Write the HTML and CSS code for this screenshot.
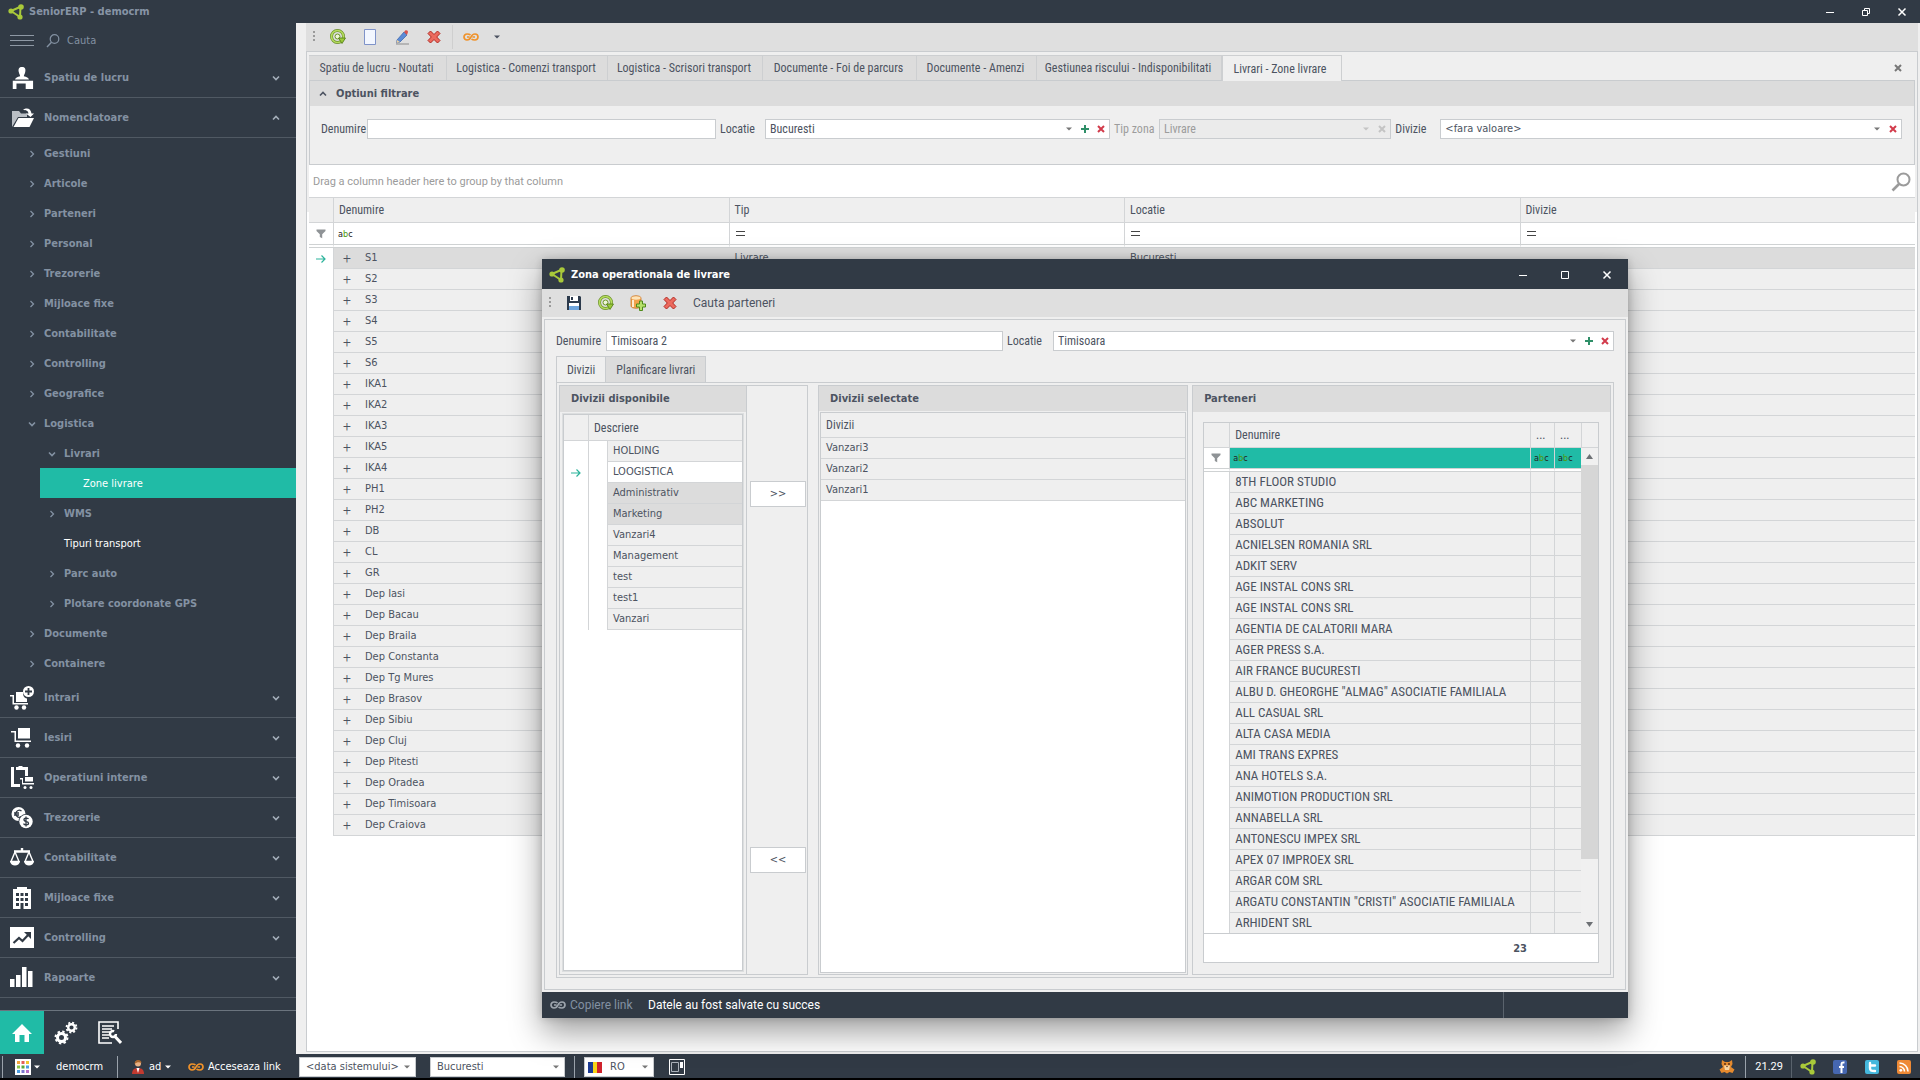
FILE: index.html
```html
<!DOCTYPE html>
<html lang="ro">
<head>
<meta charset="utf-8">
<title>SeniorERP - democrm</title>
<link rel="stylesheet" href="styles.css">
</head>
<body>
<svg class="defs" aria-hidden="true">
  <symbol id="logo" viewBox="0 0 16 16"><path d="M3 7 12 3M3 7l9 6M12.500 3l-.5 10" fill="none" stroke="#a9c93a" stroke-width="2"/><circle cx="3" cy="7" r="2.600" fill="#a9c93a"/><circle cx="13" cy="3" r="2.800" fill="#a9c93a"/><circle cx="12" cy="13" r="2.600" fill="#a9c93a"/></symbol>
  <symbol id="down" viewBox="0 0 8 8"><path d="M1 2.500 4 5.500 7 2.500" fill="none" stroke="currentColor" stroke-width="1.600"/></symbol>
  <symbol id="up" viewBox="0 0 8 8"><path d="M1 5.500 4 2.500 7 5.500" fill="none" stroke="currentColor" stroke-width="1.600"/></symbol>
  <symbol id="right" viewBox="0 0 8 8"><path d="M2.500 1 5.500 4 2.500 7" fill="none" stroke="currentColor" stroke-width="1.300"/></symbol>
  <symbol id="caret" viewBox="0 0 6 6"><path d="M0 1.500h6L3 4.500z" fill="currentColor"/></symbol>
  <symbol id="plus" viewBox="0 0 8 8"><path d="M4 0v8M0 4h8" stroke="currentColor" stroke-width="2"/></symbol>
  <symbol id="cross" viewBox="0 0 8 8"><path d="M1 1l6 6M7 1 1 7" stroke="currentColor" stroke-width="2"/></symbol>
  <symbol id="min" viewBox="0 0 10 10"><path d="M1 5.500h8" stroke="#fff"/></symbol>
  <symbol id="max" viewBox="0 0 10 10"><path d="M1.500 1.500h7v7h-7z" fill="none" stroke="#fff"/></symbol>
  <symbol id="restore" viewBox="0 0 10 10"><path d="M1.500 3.500h5v5h-5zM3.500 3.500v-2h5v5h-2" fill="none" stroke="#fff"/></symbol>
  <symbol id="close" viewBox="0 0 10 10"><path d="M1.500 1.500l7 7M8.500 1.500l-7 7" stroke="#fff" stroke-width="1.500"/></symbol>
  <symbol id="loupe" viewBox="0 0 20 20"><circle cx="12.500" cy="7.500" r="6" fill="none" stroke="currentColor" stroke-width="2"/><path d="M8 12 1.500 18.500" stroke="currentColor" stroke-width="2.600"/></symbol>
  <symbol id="loupe-thin" viewBox="0 0 14 14"><circle cx="8.500" cy="5" r="4.300" fill="none" stroke="currentColor" stroke-width="1.200"/><path d="M5.500 8.200 1 13" stroke="currentColor" stroke-width="1.400"/></symbol>
  <symbol id="refresh" viewBox="0 0 16 16"><circle cx="7.500" cy="7.500" r="6" fill="none" stroke="#6b8f2c" stroke-width="3"/><circle cx="7.500" cy="7.500" r="6" fill="none" stroke="#b5dc5e" stroke-width="1.700"/><circle cx="7.500" cy="7.500" r="2.500" fill="#eef6d8" stroke="#6b9526"/><path d="M8.500 9h7L12 14.500z" fill="#9ccb3b" stroke="#4f7a12" stroke-width=".8"/></symbol>
  <symbol id="page" viewBox="0 0 16 16"><path d="M2.500.5h11v15h-11z" fill="#f3f7ff" stroke="#7f93c9"/></symbol>
  <symbol id="pencil" viewBox="0 0 16 16"><path d="M3 11 10 3l3 3-7 7-3.500 1z" fill="#5b8bd6" stroke="#3560a8" stroke-width=".7"/><path d="M10 3l1.500-1.700c1.500-.6 2.500.6 2.500 1.700L13 6z" fill="#d8534c"/><path d="M3 11l3 2-3.500 1z" fill="#f0d2a0"/><path d="M2 15h13" stroke="#8b8b8b"/></symbol>
  <symbol id="delete" viewBox="0 0 16 16"><path d="M2 4.500 4.500 2 8 5.500 11.500 2 14 4.500 10.700 8 14 11.500 11.500 14 8 10.500 4.500 14 2 11.500 5.300 8z" fill="#ec6a5e" stroke="#b32a22"/></symbol>
  <symbol id="chain" viewBox="0 0 16 8"><path d="M7.500 2C6.500 1 5.500 1 4 1a3 3 0 0 0 0 6c2 0 3-.6 4-3s2-3 4-3a3 3 0 0 1 0 6c-1.500 0-2.500 0-3.500-1M4 4h2.500M9.500 4H12" fill="none" stroke="currentColor" stroke-width="1.700"/></symbol>
  <symbol id="save" viewBox="0 0 16 16"><path d="M1 1h13l1 1v13H1z" fill="#2c3a4c"/><path d="M4 1h8v5H4z" fill="#fff"/><path d="M5 2h2v3H5z" fill="#2c3a4c"/><path d="M3 8h10v7H3z" fill="#fff"/><path d="M3 11h10v4H3z" fill="#6fa5dc"/></symbol>
  <symbol id="dbadd" viewBox="0 0 16 16"><path d="M1 3c0-3 10-3 10 0v8c0 3-10 3-10 0z" fill="#f1a24b" stroke="#c9772a" stroke-width=".8"/><ellipse cx="6" cy="3" rx="4.600" ry="1.700" fill="#fde3b8"/><path d="M3 5v7" stroke="#fde9cf" stroke-width="2"/><path d="M9.500 6h3v3h3v3h-3v3.500h-3V12h-3V9h3z" fill="#b6e06a" stroke="#4f8a1a"/></symbol>
  <symbol id="filter" viewBox="0 0 10 10"><path d="M.5.5h9v1.500L6.200 5.200v4L3.800 8V5.200L.5 2z" fill="#8f9396"/></symbol>
  <symbol id="arrow" viewBox="0 0 10 8"><path d="M0 4h9M5.500.5 9 4 5.500 7.500" fill="none" stroke="#2cb39b" stroke-width="1.200"/></symbol>
</svg>

<header class="titlebar">
  <svg class="i16"><use href="#logo"/></svg><h1>SeniorERP - democrm</h1>
  <div class="winbtns"><button aria-label="Minimizare"><svg class="i10"><use href="#min"/></svg></button><button aria-label="Restaurare"><svg class="i10"><use href="#restore"/></svg></button><button aria-label="Inchidere"><svg class="i10"><use href="#close"/></svg></button></div>
</header>

<div class="workspace">
  <nav class="sidebar">
    <div class="find"><button class="burger" aria-label="Meniu"><i></i><i></i><i></i></button><svg class="i14"><use href="#loupe-thin"/></svg><input type="text" placeholder="Cauta" aria-label="Cauta"></div>
    <a class="sec" href="#"><svg viewBox="0 0 24 26"><path d="M12 1c4 0 4 3 3.500 5.500C15 9 14 10 14 11c3 .7 5 1.500 5.500 3.500h-15C5 12.500 7 11.700 10 11c0-1-1-2-1.500-4.500C8 4 8 1 12 1zM2 16h22v9h-8v-6H6v6H2z" fill="#fff"/></svg><span>Spatiu de lucru</span><svg class="i8"><use href="#down"/></svg></a>
    <a class="sec" href="#"><svg viewBox="0 0 24 24"><path d="M2 5h7l2 2.500h6V11H8L2 21z" fill="#b9bec4"/><path d="M8.500 12H24l-4.500 9H3.500z" fill="#fff"/><path d="M13 4c4-3 8-1 8.500 3.500H24L20.500 11 16 7.500h2.500C18 4.500 16 4 13 4z" fill="#fff"/></svg><span>Nomenclatoare</span><svg class="i8"><use href="#up"/></svg></a>
    <a class="sub" href="#"><svg class="i8"><use href="#right"/></svg>Gestiuni</a>
    <a class="sub" href="#"><svg class="i8"><use href="#right"/></svg>Articole</a>
    <a class="sub" href="#"><svg class="i8"><use href="#right"/></svg>Parteneri</a>
    <a class="sub" href="#"><svg class="i8"><use href="#right"/></svg>Personal</a>
    <a class="sub" href="#"><svg class="i8"><use href="#right"/></svg>Trezorerie</a>
    <a class="sub" href="#"><svg class="i8"><use href="#right"/></svg>Mijloace fixe</a>
    <a class="sub" href="#"><svg class="i8"><use href="#right"/></svg>Contabilitate</a>
    <a class="sub" href="#"><svg class="i8"><use href="#right"/></svg>Controlling</a>
    <a class="sub" href="#"><svg class="i8"><use href="#right"/></svg>Geografice</a>
    <a class="sub" href="#"><svg class="i8"><use href="#down"/></svg>Logistica</a>
    <a class="sub lvl2" href="#"><svg class="i8"><use href="#down"/></svg>Livrari</a>
    <a class="sub current" href="#">Zone livrare</a>
    <a class="sub lvl2" href="#"><svg class="i8"><use href="#right"/></svg>WMS</a>
    <a class="sub leaf" href="#">Tipuri transport</a>
    <a class="sub lvl2" href="#"><svg class="i8"><use href="#right"/></svg>Parc auto</a>
    <a class="sub lvl2" href="#"><svg class="i8"><use href="#right"/></svg>Plotare coordonate GPS</a>
    <a class="sub" href="#"><svg class="i8"><use href="#right"/></svg>Documente</a>
    <a class="sub" href="#"><svg class="i8"><use href="#right"/></svg>Containere</a>
    <a class="sec" href="#"><svg viewBox="0 0 24 24"><path d="M0 9h4v8h14v1.500H2.500v-8H0zM6 6h7c0 4 1 6 4 6.500V16H6z" fill="#fff"/><circle cx="6.500" cy="21.500" r="2.200" fill="#fff"/><circle cx="14" cy="21.500" r="2.200" fill="#fff"/><circle cx="18.500" cy="5.500" r="5.500" fill="#fff"/><path d="M18.500 2v7M15 5.500h7" stroke="#313a45" stroke-width="1.800"/></svg><span>Intrari</span><svg class="i8"><use href="#down"/></svg></a>
    <a class="sec" href="#"><svg viewBox="0 0 24 24"><path d="M1 5h5v9.500h15V16H4.500V6.500H1zM8 2h12v10.500H8z" fill="#fff"/><circle cx="8" cy="19.500" r="2.200" fill="#fff"/><circle cx="17" cy="19.500" r="2.200" fill="#fff"/></svg><span>Iesiri</span><svg class="i8"><use href="#down"/></svg></a>
    <a class="sec" href="#"><svg viewBox="0 0 24 24"><path d="M1 1h3v17h6v3H1zM6 1h2l1-1h3l1 1h2v3H6zM15 1h3v9h-3zM15 11h8v4.500h-8zM10 12h3v5h11v1.500H12v-5h-2z" fill="#fff"/><circle cx="15" cy="21.500" r="1.500" fill="#fff"/><circle cx="21" cy="21.500" r="1.500" fill="#fff"/></svg><span>Operatiuni interne</span><svg class="i8"><use href="#down"/></svg></a>
    <a class="sec" href="#"><svg viewBox="0 0 24 24"><circle cx="8.500" cy="8" r="7" fill="#fff"/><path d="M11.500 5a3.500 3.500 0 1 0 0 5.500M4 7h5M4 9h5" fill="none" stroke="#313a45" stroke-width="1.300"/><circle cx="16" cy="15.500" r="7.500" fill="#313a45"/><circle cx="16" cy="15.500" r="6.700" fill="#fff"/><path d="M18.500 13c-1-1.500-5-1.200-4.500 1s4.500 1 4.500 3.200-4 2-5 .4M16 10.500v10" fill="none" stroke="#313a45" stroke-width="1.300"/></svg><span>Trezorerie</span><svg class="i8"><use href="#down"/></svg></a>
    <a class="sec" href="#"><svg viewBox="0 0 24 24"><path d="M12 2v4M4 5.500h16" stroke="#fff" stroke-width="2.400"/><path d="M5 6 1 15.500h8zM19 6l-4 9.500h8z" fill="none" stroke="#fff" stroke-width="1.400"/><path d="M0 15h10c-.5 6-9.500 6-10 0zM14 15h10c-.5 6-9.500 6-10 0z" fill="#fff"/></svg><span>Contabilitate</span><svg class="i8"><use href="#down"/></svg></a>
    <a class="sec" href="#"><svg viewBox="0 0 24 24"><path d="M7 1h10v2h4v20H3V3h4z" fill="#fff"/><path d="M6 7h3v3H6zM10.500 7h3v3h-3zM15 7h3v3h-3zM6 12h3v3H6zM10.500 12h3v3h-3zM15 12h3v3h-3zM6 17h3v3H6zM10.500 17h3v6h-3zM15 17h3v3h-3z" fill="#313a45"/></svg><span>Mijloace fixe</span><svg class="i8"><use href="#down"/></svg></a>
    <a class="sec" href="#"><svg viewBox="0 0 24 24"><path d="M0 1h24v21H0z" fill="#fff"/><path d="M3.500 17 9 12l3.500 3L19 8" fill="none" stroke="#313a45" stroke-width="2.200"/><path d="M14 6h7v7z" fill="#313a45"/></svg><span>Controlling</span><svg class="i8"><use href="#down"/></svg></a>
    <a class="sec" href="#"><svg viewBox="0 0 24 24"><path d="M0 13h4.500v8H0zM6 9h4.500v12H6zM12 1h4.500v20H12zM18 5h4.500v16H18z" fill="#fff"/></svg><span>Rapoarte</span><svg class="i8"><use href="#down"/></svg></a>
    <div class="dock">
      <button class="on" aria-label="Acasa"><svg class="i24" viewBox="0 0 24 24"><path d="M12 3 22 13h-3v8h-4.500v-7h-5v7H5v-8H2z" fill="#fff"/></svg></button>
      <button aria-label="Setari"><svg class="i24" viewBox="0 0 24 24"><g fill="none" stroke="#fff"><circle cx="7.500" cy="16.500" r="4" stroke-width="3"/><circle cx="7.500" cy="16.500" r="6" stroke-width="2" stroke-dasharray="2.400 2.310"/><circle cx="17.500" cy="6.500" r="3.300" stroke-width="2.400"/><circle cx="17.500" cy="6.500" r="5" stroke-width="1.800" stroke-dasharray="2 1.930"/></g></svg></button>
      <button aria-label="Rapoarte"><svg class="i24" viewBox="0 0 24 24"><path d="M20 8V1H1v21h13" fill="none" stroke="#fff" stroke-width="1.600"/><path d="M4 5h12M4 8h10M4 11h8M4 14h7M4 17h7" stroke="#fff" stroke-width="1.500"/><path d="M16 14.500 23 22" stroke="#fff" stroke-width="3"/><circle cx="15" cy="13" r="3" fill="none" stroke="#fff" stroke-width="2.400" stroke-dasharray="15 4"/></svg></button>
    </div>
  </nav>

  <main class="main">
    <div class="toolbar"><i class="grip"></i>
      <button aria-label="Reincarca"><svg class="i16"><use href="#refresh"/></svg></button>
      <button aria-label="Nou"><svg class="i16"><use href="#page"/></svg></button>
      <button aria-label="Editare"><svg class="i16"><use href="#pencil"/></svg></button>
      <button aria-label="Stergere"><svg class="i16"><use href="#delete"/></svg></button>
      <button class="linkbtn" aria-label="Link"><svg class="chain"><use href="#chain"/></svg></button>
      <button class="narrow" aria-label="Optiuni"><svg class="i6"><use href="#caret"/></svg></button>
    </div>
    <div class="document">
      <div class="tabs">
        <button>Spatiu de lucru - Noutati</button><button>Logistica - Comenzi transport</button><button>Logistica - Scrisori transport</button><button>Documente - Foi de parcurs</button><button>Documente - Amenzi</button><button>Gestiunea riscului - Indisponibilitati</button><button class="on">Livrari - Zone livrare</button>
        <button class="closetab" aria-label="Inchide"><svg class="i8"><use href="#cross"/></svg></button>
      </div>
      <section class="filters">
        <h2><svg class="i8"><use href="#up"/></svg>Optiuni filtrare</h2>
        <form class="filter-form">
          <label for="f-den">Denumire</label><input class="box" id="f-den" type="text">
          <label for="f-loc">Locatie</label>
          <div class="combo"><select id="f-loc"><option>Bucuresti</option></select><svg class="i6"><use href="#caret"/></svg><button type="button" class="add" aria-label="Adauga"><svg class="i8"><use href="#plus"/></svg></button><button type="button" class="clear" aria-label="Goleste"><svg class="i8"><use href="#cross"/></svg></button></div>
          <label class="off" for="f-tip">Tip zona</label>
          <div class="combo off"><select id="f-tip" disabled><option>Livrare</option></select><svg class="i6"><use href="#caret"/></svg><button type="button" class="clear" disabled aria-label="Goleste"><svg class="i8"><use href="#cross"/></svg></button></div>
          <label for="f-div">Divizie</label>
          <div class="combo wide"><select id="f-div"><option>&lt;fara valoare&gt;</option></select><svg class="i6"><use href="#caret"/></svg><button type="button" class="clear" aria-label="Goleste"><svg class="i8"><use href="#cross"/></svg></button></div>
        </form>
      </section>
      <div class="groupbar"><span>Drag a column header here to group by that column</span><svg class="i20"><use href="#loupe"/></svg></div>
      <table class="grid">
        <colgroup><col class="ind"><col><col><col><col></colgroup>
        <thead>
          <tr><th></th><th>Denumire</th><th>Tip</th><th>Locatie</th><th>Divizie</th></tr>
          <tr class="frow"><td><svg class="i10"><use href="#filter"/></svg></td><td><span class="abc">a<b>b</b>c</span></td><td><span class="eq"></span></td><td><span class="eq"></span></td><td><span class="eq"></span></td></tr>
        </thead>
        <tbody>
          <tr class="focus"><td><svg class="arrow"><use href="#arrow"/></svg></td><td><button>+</button>S1</td><td>Livrare</td><td>Bucuresti</td><td></td></tr>
          <tr><td></td><td><button>+</button>S2</td><td></td><td></td><td></td></tr>
          <tr><td></td><td><button>+</button>S3</td><td></td><td></td><td></td></tr>
          <tr><td></td><td><button>+</button>S4</td><td></td><td></td><td></td></tr>
          <tr><td></td><td><button>+</button>S5</td><td></td><td></td><td></td></tr>
          <tr><td></td><td><button>+</button>S6</td><td></td><td></td><td></td></tr>
          <tr><td></td><td><button>+</button>IKA1</td><td></td><td></td><td></td></tr>
          <tr><td></td><td><button>+</button>IKA2</td><td></td><td></td><td></td></tr>
          <tr><td></td><td><button>+</button>IKA3</td><td></td><td></td><td></td></tr>
          <tr><td></td><td><button>+</button>IKA5</td><td></td><td></td><td></td></tr>
          <tr><td></td><td><button>+</button>IKA4</td><td></td><td></td><td></td></tr>
          <tr><td></td><td><button>+</button>PH1</td><td></td><td></td><td></td></tr>
          <tr><td></td><td><button>+</button>PH2</td><td></td><td></td><td></td></tr>
          <tr><td></td><td><button>+</button>DB</td><td></td><td></td><td></td></tr>
          <tr><td></td><td><button>+</button>CL</td><td></td><td></td><td></td></tr>
          <tr><td></td><td><button>+</button>GR</td><td></td><td></td><td></td></tr>
          <tr><td></td><td><button>+</button>Dep Iasi</td><td></td><td></td><td></td></tr>
          <tr><td></td><td><button>+</button>Dep Bacau</td><td></td><td></td><td></td></tr>
          <tr><td></td><td><button>+</button>Dep Braila</td><td></td><td></td><td></td></tr>
          <tr><td></td><td><button>+</button>Dep Constanta</td><td></td><td></td><td></td></tr>
          <tr><td></td><td><button>+</button>Dep Tg Mures</td><td></td><td></td><td></td></tr>
          <tr><td></td><td><button>+</button>Dep Brasov</td><td></td><td></td><td></td></tr>
          <tr><td></td><td><button>+</button>Dep Sibiu</td><td></td><td></td><td></td></tr>
          <tr><td></td><td><button>+</button>Dep Cluj</td><td></td><td></td><td></td></tr>
          <tr><td></td><td><button>+</button>Dep Pitesti</td><td></td><td></td><td></td></tr>
          <tr><td></td><td><button>+</button>Dep Oradea</td><td></td><td></td><td></td></tr>
          <tr><td></td><td><button>+</button>Dep Timisoara</td><td></td><td></td><td></td></tr>
          <tr><td></td><td><button>+</button>Dep Craiova</td><td></td><td></td><td></td></tr>
        </tbody>
      </table>
    </div>
  </main>
</div>

<footer class="taskbar">
  <span class="sep"></span>
  <button class="apps" aria-label="Aplicatii"><svg class="i16" viewBox="0 0 16 16"><path d="M0 0h16v16H0z" fill="#fff"/><path d="M2 2h3v3H2z" fill="#f3a33a"/><path d="M6.500 2h3v3h-3z" fill="#e2605a"/><path d="M11 2h3v3h-3z" fill="#f0c52e"/><path d="M2 6.500h3v3H2z" fill="#8ac249"/><path d="M6.500 6.500h3v3h-3z" fill="#58a840"/><path d="M11 6.500h3v3h-3z" fill="#4d9de0"/><path d="M2 11h3v3H2z" fill="#4d9de0"/><path d="M6.500 11h3v3h-3z" fill="#7a78d0"/><path d="M11 11h3v3h-3z" fill="#b46fc7"/></svg><svg class="i6"><use href="#caret"/></svg></button>
  <span class="db">democrm</span>
  <span class="sep"></span>
  <button class="user"><svg class="i14" viewBox="0 0 14 14"><circle cx="7" cy="3.500" r="3" fill="#e9b184"/><path d="M3.500 4C3.500-1 10.500-1 10.500 3 9 2 6 1.500 3.500 4z" fill="#a8652c"/><path d="M1 14c0-4 2-6 6-6s6 2 6 6z" fill="#c23a30"/><path d="M5.500 8 7 13l1.500-5z" fill="#fff"/></svg>ad<svg class="i6"><use href="#caret"/></svg></button>
  <button class="golink"><svg class="chain"><use href="#chain"/></svg>Acceseaza link</button>
  <div class="combo date"><select aria-label="Data"><option>&lt;data sistemului&gt;</option></select><svg class="i6"><use href="#caret"/></svg></div>
  <div class="combo city"><select aria-label="Locatie de lucru"><option>Bucuresti</option></select><svg class="i6"><use href="#caret"/></svg></div>
  <span class="sep"></span>
  <div class="combo lang"><svg class="flag" viewBox="0 0 14 11"><path d="M0 0h5v11H0z" fill="#1d3c94"/><path d="M5 0h4v11H5z" fill="#f7d417"/><path d="M9 0h5v11H9z" fill="#d0222c"/></svg><select aria-label="Limba"><option>RO</option></select><svg class="i6"><use href="#caret"/></svg></div>
  <button class="layout" aria-label="Aspect"><svg class="i16" viewBox="0 0 16 16"><path d="M.5.5h15v15H.5z" fill="none" stroke="#fff"/><path d="M2.500 3.500h7v9h-7z" fill="none" stroke="#aab1ba"/><path d="M11 3h3v6h-3z" fill="#fff"/></svg></button>
  <div class="tray">
    <svg class="i16" viewBox="0 0 16 16"><path d="M3 1l3 2h4l3-2 .5 4-1.500 3 3.500 2.500-2 3.500-3-1-2.500 1.500L5.500 13l-3 1-2-3.500L4 8 2.500 5z" fill="#e58a2e"/><path d="M5 6.500h6L10 11H6z" fill="#f8d6a5"/><circle cx="6" cy="5" r="1" fill="#5b2f14"/><circle cx="10" cy="5" r="1" fill="#5b2f14"/><path d="M7 7h2l-1 1.500z" fill="#5b2f14"/></svg>
    <span class="sep"></span><span class="clock">21.29</span><span class="sep dim"></span>
    <svg class="i16"><use href="#logo"/></svg>
    <svg class="i16" viewBox="0 0 16 16"><rect x="1" y="1" width="14" height="14" rx="2" fill="#4667b0"/><path d="M12.500 3.500c-2.500-.3-3 .5-3 2V14M7 8h5" fill="none" stroke="#fff" stroke-width="2"/></svg>
    <svg class="i16" viewBox="0 0 16 16"><rect x="1" y="1" width="14" height="14" rx="2" fill="#45b8dd"/><path d="M6 4v5c0 2.500 1 3 5 3M6 6.500h5" fill="none" stroke="#fff" stroke-width="2.400" stroke-linecap="round"/></svg>
    <svg class="i16" viewBox="0 0 16 16"><rect x="1" y="1" width="14" height="14" rx="2" fill="#ee8a36"/><circle cx="4.800" cy="11.300" r="1.400" fill="#fff"/><path d="M3.500 7.500a5 5 0 0 1 5 5M3.500 4a8.500 8.500 0 0 1 8.500 8.500" fill="none" stroke="#fff" stroke-width="1.600"/></svg>
  </div>
</footer>

<div class="dialog" role="dialog" aria-labelledby="dlg-title">
  <header><svg class="i16"><use href="#logo"/></svg><h2 id="dlg-title">Zona operationala de livrare</h2>
    <div class="winbtns"><button aria-label="Minimizare"><svg class="i10"><use href="#min"/></svg></button><button aria-label="Maximizare"><svg class="i10"><use href="#max"/></svg></button><button aria-label="Inchidere"><svg class="i10"><use href="#close"/></svg></button></div></header>
  <div class="toolbar"><i class="grip"></i>
    <button aria-label="Salvare"><svg class="i16"><use href="#save"/></svg></button>
    <button aria-label="Reincarca"><svg class="i16"><use href="#refresh"/></svg></button>
    <button aria-label="Adauga"><svg class="i16"><use href="#dbadd"/></svg></button>
    <button aria-label="Stergere"><svg class="i16"><use href="#delete"/></svg></button>
    <button class="text">Cauta parteneri</button></div>
  <div class="dbody">
    <form class="dform">
      <label for="d-den">Denumire</label><input class="box" id="d-den" type="text" value="Timisoara 2">
      <label for="d-loc">Locatie</label>
      <div class="combo"><select id="d-loc"><option>Timisoara</option></select><svg class="i6"><use href="#caret"/></svg><button type="button" class="add" aria-label="Adauga"><svg class="i8"><use href="#plus"/></svg></button><button type="button" class="clear" aria-label="Goleste"><svg class="i8"><use href="#cross"/></svg></button></div>
    </form>
    <div class="dtabs"><button class="on">Divizii</button><button>Planificare livrari</button></div>
    <div class="pane">
      <section class="group avail"><h3>Divizii disponibile</h3>
        <div class="list">
          <table><colgroup><col class="ind"><col class="indent"><col></colgroup>
            <thead><tr><th></th><th colspan="2">Descriere</th></tr></thead>
            <tbody>
              <tr><td></td><td></td><td>HOLDING</td></tr>
              <tr class="focus"><td><svg class="arrow"><use href="#arrow"/></svg></td><td></td><td>LOOGISTICA</td></tr>
              <tr class="sel"><td></td><td></td><td>Administrativ</td></tr>
              <tr class="sel"><td></td><td></td><td>Marketing</td></tr>
              <tr><td></td><td></td><td>Vanzari4</td></tr>
              <tr><td></td><td></td><td>Management</td></tr>
              <tr><td></td><td></td><td>test</td></tr>
              <tr><td></td><td></td><td>test1</td></tr>
              <tr><td></td><td></td><td>Vanzari</td></tr>
            </tbody></table>
        </div>
      </section>
      <div class="movers"><button>&gt;&gt;</button><button>&lt;&lt;</button></div>
      <section class="group chosen"><h3>Divizii selectate</h3>
        <div class="list"><table><thead><tr><th>Divizii</th></tr></thead><tbody><tr><td>Vanzari3</td></tr><tr><td>Vanzari2</td></tr><tr><td>Vanzari1</td></tr></tbody></table></div>
      </section>
      <section class="group partners"><h3>Parteneri</h3>
        <div class="list">
          <div class="scroller">
          <table><colgroup><col class="ind"><col><col class="c24"><col class="c27"></colgroup>
            <thead><tr><th></th><th>Denumire</th><th>...</th><th>...</th></tr>
            <tr class="frow"><td><svg class="i10"><use href="#filter"/></svg></td><td class="first"><span class="abc">a<b>b</b>c</span></td><td><span class="abc">a<b>b</b>c</span></td><td><span class="abc">a<b>b</b>c</span></td></tr></thead>
            <tbody>
              <tr><td></td><td>8TH FLOOR STUDIO</td><td></td><td></td></tr>
              <tr><td></td><td>ABC MARKETING</td><td></td><td></td></tr>
              <tr><td></td><td>ABSOLUT</td><td></td><td></td></tr>
              <tr><td></td><td>ACNIELSEN ROMANIA SRL</td><td></td><td></td></tr>
              <tr><td></td><td>ADKIT SERV</td><td></td><td></td></tr>
              <tr><td></td><td>AGE INSTAL CONS SRL</td><td></td><td></td></tr>
              <tr><td></td><td>AGE INSTAL CONS SRL</td><td></td><td></td></tr>
              <tr><td></td><td>AGENTIA DE CALATORII MARA</td><td></td><td></td></tr>
              <tr><td></td><td>AGER PRESS S.A.</td><td></td><td></td></tr>
              <tr><td></td><td>AIR FRANCE BUCURESTI</td><td></td><td></td></tr>
              <tr><td></td><td>ALBU D. GHEORGHE "ALMAG" ASOCIATIE FAMILIALA</td><td></td><td></td></tr>
              <tr><td></td><td>ALL CASUAL SRL</td><td></td><td></td></tr>
              <tr><td></td><td>ALTA CASA MEDIA</td><td></td><td></td></tr>
              <tr><td></td><td>AMI TRANS EXPRES</td><td></td><td></td></tr>
              <tr><td></td><td>ANA HOTELS S.A.</td><td></td><td></td></tr>
              <tr><td></td><td>ANIMOTION PRODUCTION SRL</td><td></td><td></td></tr>
              <tr><td></td><td>ANNABELLA SRL</td><td></td><td></td></tr>
              <tr><td></td><td>ANTONESCU IMPEX SRL</td><td></td><td></td></tr>
              <tr><td></td><td>APEX 07 IMPROEX SRL</td><td></td><td></td></tr>
              <tr><td></td><td>ARGAR COM SRL</td><td></td><td></td></tr>
              <tr><td></td><td>ARGATU CONSTANTIN "CRISTI" ASOCIATIE FAMILIALA</td><td></td><td></td></tr>
              <tr><td></td><td>ARHIDENT SRL</td><td></td><td></td></tr>
            </tbody></table>
            <div class="scrollbar"><i class="corner"></i><svg viewBox="0 0 17 17"><path d="M5 11l3.500-5 3.500 5z" fill="#6d7074"/></svg><i class="thumb"></i><i class="track"></i><svg viewBox="0 0 17 17"><path d="M5 6l3.500 5L12 6z" fill="#6d7074"/></svg></div>
          </div>
          <div class="total">23</div>
        </div>
      </section>
    </div>
  </div>
  <footer><button><svg class="chain"><use href="#chain"/></svg>Copiere link</button><span>Datele au fost salvate cu succes</span></footer>
</div>
</body>
</html>
```
FILE: styles.css
```css
:root{
  --dark:#313a45;
  --panel:#efefef;
  --head:#dcdcdc;
  --line:#c9cccf;
  --ink:#4c5361;
  --accent:#20bba6;
  --sans:"DejaVu Sans Condensed","DejaVu Sans",sans-serif;
  --narrow:"Roboto Condensed",Roboto,sans-serif;
}
*{box-sizing:border-box}
body{margin:0;height:100vh;display:flex;flex-direction:column;background:var(--dark);color:var(--ink);font:11px/14px var(--sans);overflow:hidden;position:relative}
button,input,select{font:inherit;color:inherit;border:0;background:none;margin:0;padding:0;border-radius:0}
select{appearance:none;outline:0;opacity:1}
h1,h2,h3{margin:0;font-size:11px;line-height:14px;font-weight:700}
svg{display:block;flex:none}
a{color:inherit;text-decoration:none}
table{border-collapse:separate;border-spacing:0;table-layout:fixed;width:100%}
th{font-weight:400;text-align:left}
th,td{padding:0;white-space:nowrap;overflow:hidden}
.defs{position:absolute;width:0;height:0}
.i6{width:6px;height:6px}.i8{width:8px;height:8px}.i10{width:10px;height:10px}.i14{width:14px;height:14px}.i16{width:16px;height:16px}.i20{width:20px;height:20px}.i24{width:24px;height:24px}
.chain{width:16px;height:8px}
.arrow{width:10px;height:8px}

/* window chrome */
.titlebar{flex:none;height:23px;display:flex;align-items:center;padding:1px 0 0 8px;color:#8794a5}
.titlebar h1{margin-left:5px;flex:1}
.winbtns{display:flex}
.winbtns button{width:36px;height:22px;display:grid;place-items:center}
.workspace{flex:1;display:flex;min-height:0}

/* sidebar */
.sidebar{width:296px;flex:none;display:flex;flex-direction:column;color:#8391a2;font-weight:700}
.find{display:flex;align-items:center;height:35px;padding:0 10px;font-weight:400}
.find input{margin-left:7px;width:160px}
.find input::placeholder{color:#8391a2;opacity:1}
.burger{width:24px;display:grid;gap:4px;margin-right:12px}
.burger i{height:1px;background:#8e98a4}
.sec{height:40px;flex:none;display:flex;align-items:center;padding:1px 16px 0 10px;border-bottom:1px solid #505963}
.sec svg:first-child{width:24px;height:24px}
.sec span{flex:1;padding-left:10px}
.sec .i8{color:#a5afba}
.sub{height:30px;flex:none;display:flex;align-items:center;padding:1px 0 0 28px;gap:8px}
.lvl2{padding-left:48px}
.leaf{padding-left:64px;color:#fff;font-weight:400}
.current{margin-left:40px;padding-left:43px;background:var(--accent);color:#fff;font-weight:400}
.dock{margin-top:auto;display:flex;border-top:1px solid #6b747e}
.dock button{width:44px;height:43px;display:grid;place-items:center}
.dock .on{background:var(--accent)}

/* toolbars */
.main{flex:1;min-width:0;display:flex;flex-direction:column;background:var(--panel);padding:0 2px 2px 10px}
.toolbar{flex:none;height:28px;display:flex;align-items:center;background:#dfdfdf;padding-left:7px}
.grip{width:2px;height:12px;margin-right:7px;background:repeating-linear-gradient(#9a9a9a 0 2px,transparent 2px 4px)}
.toolbar button{width:32px;height:24px;display:grid;place-items:center}
.toolbar .linkbtn{width:36px;margin-left:2px;border-left:1px solid #cfcfcf;color:#f0922a}
.toolbar .narrow{width:18px}
.toolbar .text{width:auto;padding:0 7px;font:12px/16px Roboto,sans-serif}
.document{flex:1;display:flex;flex-direction:column;border:1px solid var(--line);padding:3px 2px 0;min-height:0;background:linear-gradient(var(--panel) 0 160px,#fff 160px)}

/* document tabs */
.tabs{display:grid;grid-template-columns:138px 161px 155px 154px 120px 185px 120px 1fr;flex:none;height:26px;font:12px/24px var(--narrow);border-bottom:1px solid var(--line)}
.tabs button{background:var(--head);border:1px solid #cdcfd1;border-width:1px 1px 0 0;padding-right:2px;text-align:center;white-space:nowrap}
.tabs .on{background:var(--panel);border-left-width:1px;padding-right:4px;margin-bottom:-1px}
.tabs .closetab{border:0;background:none;justify-self:end;width:32px;display:grid;place-items:center;color:#777}

/* filter panel */
.filters{flex:none;border:1px solid var(--line);border-top:0;height:84px}
.filters h2{height:25px;display:flex;align-items:center;gap:9px;padding:1px 0 0 9px;background:var(--head)}
.filter-form{display:flex;align-items:center;padding:13px 12px 0 11px;font:12px/16px var(--narrow)}
.box,.combo{height:20px;border:1px solid var(--line);background:#fff}
.box{padding:0 4px;outline:0}
.combo{display:flex;align-items:center;min-width:0}
.combo select{flex:1;min-width:0;height:18px;padding:0 4px}
.combo .i6{color:#777}
.combo button{width:16px;height:18px;display:grid;place-items:center}
.combo>.i6{margin-right:5px}
.combo .add{color:#2f8f68}
.combo .clear{color:#d23b4b}
.filter-form label{flex:none;width:49px;padding-left:4px}
.filter-form label:first-child{width:46px;padding-left:0}
.filter-form .box{flex:340 1 0;min-width:0}
.filter-form .combo{flex:344 1 0}
.off{color:#9c9c9c}
.combo.off{background:#ebebeb}
.combo.off .i6,.combo.off .clear{color:#c4c4c4}
.filter-form .combo.off{flex-grow:231}
.filter-form .combo.wide{flex-grow:461}
.wide select{font:11px/14px var(--sans)}
.groupbar{flex:none;height:32px;display:flex;align-items:center;justify-content:space-between;background:#fff;color:#9b9b9b;padding:1px 4px 0;font:11px/14px Roboto,sans-serif}

/* main grid */
.grid .ind{width:24px}
.grid th{height:26px;background:var(--panel);border:1px solid #d3d5d7;border-width:1px 0 1px 1px;padding-left:5px;font:12px/16px var(--narrow)}
.grid .frow td{height:25px;background:#fff;border-left:1px solid #d3d5d7;border-bottom:4px double #cfd2d3;padding-left:4px}
.grid .frow td:first-child,.grid td:first-child{padding-left:7px}
.grid th:first-child,.grid td:first-child,.grid .frow td:first-child{border-left:0}
.abc{font:9px/12px var(--sans);color:#222}
.abc b{font-weight:400;color:#4f9a0a}
.eq{display:block;width:9px;height:5px;border:solid #444;border-width:1px 0;margin-left:2px}
.grid tbody td{height:21px;background:var(--panel);border-bottom:1px solid #d3d5d7;padding-left:6px}
.grid tbody td:first-child{background:#fff;border:0;padding-left:7px}
.grid tbody td:nth-child(2){border-left:1px solid #d3d5d7;padding-left:4px}
.grid tbody .focus td:nth-child(n+2){background:var(--head)}
.grid tbody button{width:18px;margin-right:9px;font:300 14px/14px Roboto,sans-serif;vertical-align:top;text-align:center}

/* taskbar */
.taskbar{flex:none;height:26px;display:flex;align-items:center;border-bottom:2px solid #000;color:#fff;padding:2px 8px 0 2px}
.sep{width:1px;height:22px;background:#9aa2ab}
.sep.dim{background:#59626c}
.taskbar button{display:flex;align-items:center}
.apps{width:53px;padding-left:12px;gap:3px}
.db{width:61px}
.user{width:70px;padding-left:13px;gap:4px}
.golink{width:111px;gap:4px}
.golink .chain{color:#f0922a}
.taskbar .combo{color:var(--ink)}
.date{width:117px}
.date select,.city select{padding-left:6px}
.city{width:135px;margin:0 9px 0 14px}
.lang{width:70px;margin-left:9px;padding-left:3px}
.flag{width:14px;height:11px}
.lang select{padding-left:8px}
.layout{margin-left:15px}
.tray{margin-left:auto;display:flex;align-items:center;gap:16px}
.tray .sep{margin:0 -7px 0 -6px}
.clock{font:11px/14px Roboto,sans-serif}
.tray .sep.dim{margin:0 -8px 0 -8px}

/* dialog */
.dialog{position:absolute;inset:259px 292px 62px 542px;display:flex;flex-direction:column;background:var(--panel);box-shadow:0 14px 30px rgba(0,0,0,.38),0 0 8px rgba(0,0,0,.18)}
.dialog>header{flex:none;height:30px;display:flex;align-items:center;padding:1px 0 0 7px;background:var(--dark);color:#fff}
.dialog>header h2{flex:1;padding-left:6px}
.dialog .winbtns button{width:42px}
.dbody{flex:1;min-height:0;display:flex;flex-direction:column;border:1px solid var(--line);margin:2px;padding:11px}
.dform{flex:none;display:flex;align-items:center;font:12px/16px var(--narrow)}
.dform label{flex:none;width:50px;padding-left:4px}
.dform label:first-child{padding-left:0}
.dform .box{flex:387 1 0;min-width:0}
.dform .combo{flex:559 1 0}
.dtabs{flex:none;display:flex;margin-top:5px;font:12px/24px var(--narrow)}
.dtabs button{height:26px;padding:0 10px;background:var(--head);border:1px solid var(--line);border-bottom:0;border-left:0}
.dtabs .on{background:var(--panel);border-left:1px solid var(--line);margin-bottom:-1px}
.pane{flex:1;min-height:0;display:flex;border:1px solid var(--line);padding:2px}
.group{display:flex;flex-direction:column;border:1px solid var(--line);min-width:0}
.group h3{flex:none;height:26px;padding:6px 11px 0;background:var(--head)}
.group .list{flex:1;min-height:0;background:#fff;border:1px solid var(--line)}
.group th{background:var(--panel);border-bottom:1px solid #d3d5d7;height:26px;padding-left:5px;font:12px/16px var(--narrow)}
.group td{height:21px;background:var(--panel);border-bottom:1px solid #d3d5d7;padding-left:5px}
.avail{flex:187 1 0}
.avail .list{margin:2px 3px 3px;outline:1px solid #dcdedf}
.avail .ind{width:25px}
.avail .indent{width:18px}
.avail td:nth-child(-n+2){background:#fff;border-bottom:0;padding-left:7px}
.avail td:nth-child(1),.avail th:first-child{border-right:1px solid #d3d5d7}
.avail td:nth-child(3){border-left:1px solid #d3d5d7}
.avail .focus td:nth-child(3){background:#fff}
.avail .sel td:nth-child(3){background:var(--head)}
.movers{width:61px;flex:none;border:1px solid var(--line);border-left:0;padding:95px 1px 101px 3px;display:flex;flex-direction:column;justify-content:space-between;margin-right:10px}
.movers button{height:26px;background:#fff;border:1px solid var(--line)}
.chosen{flex:370 1 0;margin-right:4px}
.chosen .list{margin:1px}
.chosen h3{height:25px}
.chosen th{height:25px}
.partners{flex:419 1 0}
.partners .list{margin:10px 11px 11px 10px;display:flex;flex-direction:column}
.scroller{flex:1;min-height:0;display:flex;overflow:hidden}
.partners .ind{width:25px}.c24{width:24px}.c27{width:27px}
.partners th,.partners td:nth-child(n+2){border-left:1px solid #d3d5d7}
.partners th:first-child{border-left:0}
.partners th{height:25px}
.partners td:first-child{background:#fff;border-bottom:0;padding-left:7px}
.partners tbody td{font:13px/16px var(--narrow);padding-left:5px}
.partners .frow td{height:24px;border-bottom:4px double #cfd2d3;padding-left:3px}
.partners .frow td:nth-child(n+2){background:var(--accent);background-clip:padding-box}
.partners .frow td:first-child{padding-left:7px}
.scrollbar{width:17px;flex:none;display:flex;flex-direction:column;background:#f0f0f0}
.corner{height:25px;border:solid #d3d5d7;border-width:0 0 1px 1px}
.scrollbar svg{width:17px;height:17px}
.thumb{flex:394;background:#d6d6d6}
.track{flex:57}
.total{flex:none;height:29px;border-top:1px solid var(--line);padding:8px 71px 0 0;text-align:right;font-weight:700}
.dialog>footer{flex:none;height:26px;display:flex;align-items:center;background:linear-gradient(90deg,var(--dark) calc(100% - 125px),#5a636d calc(100% - 125px) calc(100% - 124px),var(--dark) calc(100% - 124px));color:#fff;padding-left:8px;gap:12px;font:12px/16px Roboto,sans-serif}
.dialog>footer button{display:flex;align-items:center;gap:4px;color:#8391a2;width:86px;white-space:nowrap}
.dialog>footer .chain{color:#9da5ad}
```
